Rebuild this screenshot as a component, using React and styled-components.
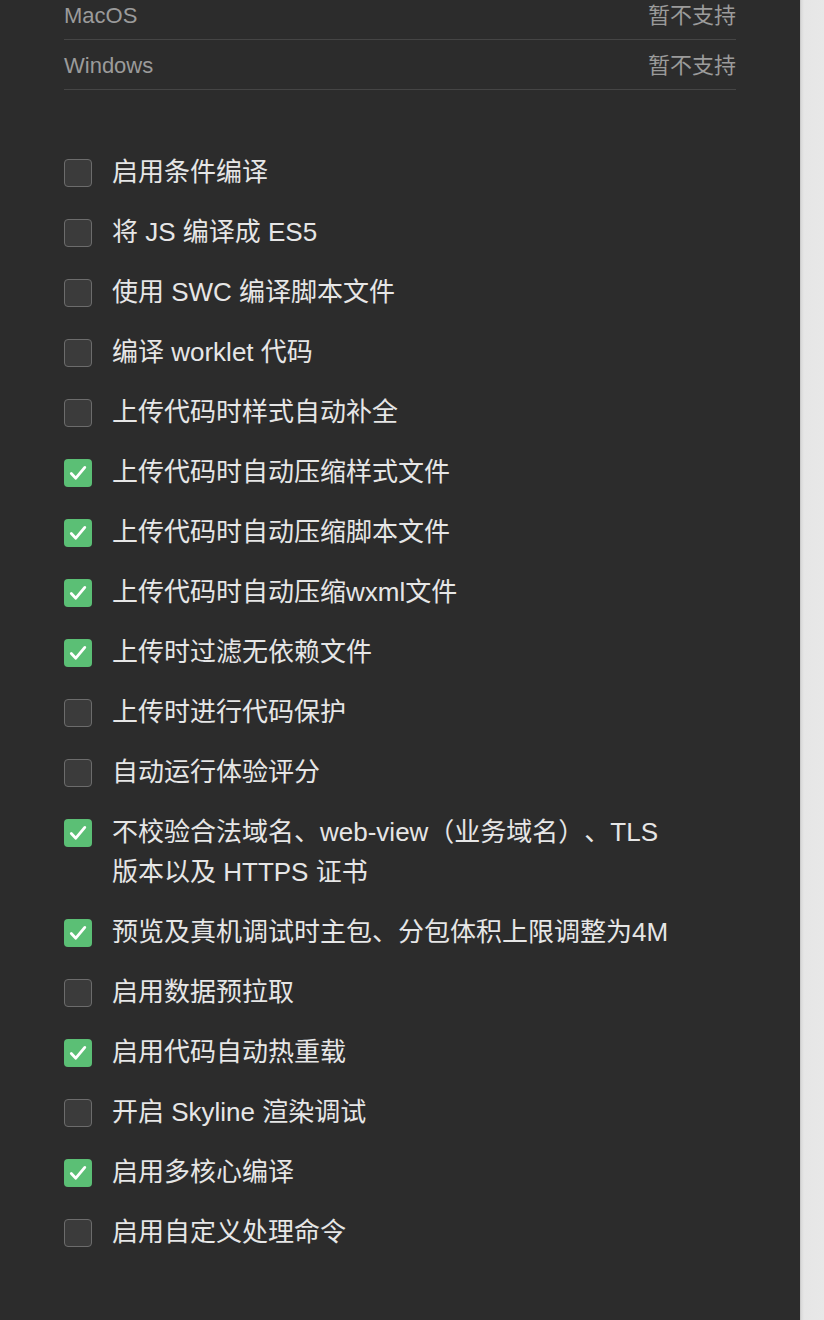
import React from 'react'
import styled, { createGlobalStyle } from 'styled-components'

const GlobalStyle = createGlobalStyle`
  html, body {
    margin: 0;
    padding: 0;
    background: #2c2c2c;
  }
  body {
    font-family: "Liberation Sans", "Noto Sans CJK SC", sans-serif;
    text-spacing-trim: space-all;
  }
`

const platforms = [
  { name: 'MacOS', status: '暂不支持' },
  { name: 'Windows', status: '暂不支持' },
]

const options = [
  { label: '启用条件编译', checked: false },
  { label: '将 JS 编译成 ES5', checked: false },
  { label: '使用 SWC 编译脚本文件', checked: false },
  { label: '编译 worklet 代码', checked: false },
  { label: '上传代码时样式自动补全', checked: false },
  { label: '上传代码时自动压缩样式文件', checked: true },
  { label: '上传代码时自动压缩脚本文件', checked: true },
  { label: '上传代码时自动压缩wxml文件', checked: true },
  { label: '上传时过滤无依赖文件', checked: true },
  { label: '上传时进行代码保护', checked: false },
  { label: '自动运行体验评分', checked: false },
  { label: '不校验合法域名、web-view（业务域名）、TLS 版本以及 HTTPS 证书', checked: true },
  { label: '预览及真机调试时主包、分包体积上限调整为4M', checked: true },
  { label: '启用数据预拉取', checked: false },
  { label: '启用代码自动热重载', checked: true },
  { label: '开启 Skyline 渲染调试', checked: false },
  { label: '启用多核心编译', checked: true },
  { label: '启用自定义处理命令', checked: false },
]

function Checkbox({ checked }) {
  return (
    <Box $checked={checked}>
      {checked && (
        <svg width="28" height="28" viewBox="0 0 28 28">
          <path
            d="M7.3 14.6 L11.8 19.2 L20.8 8.4"
            fill="none"
            stroke="#fff"
            strokeWidth="2.8"
            strokeLinecap="round"
            strokeLinejoin="round"
          />
        </svg>
      )}
    </Box>
  )
}

export default function App() {
  return (
    <Page>
      <GlobalStyle />
      <Panel>
        <PlatformList>
          {platforms.map((p) => (
            <PlatformRow key={p.name}>
              <span>{p.name}</span>
              <span>{p.status}</span>
            </PlatformRow>
          ))}
        </PlatformList>
        <OptionList>
          {options.map((o) => (
            <OptionRow key={o.label}>
              <Checkbox checked={o.checked} />
              <OptionLabel>{o.label}</OptionLabel>
            </OptionRow>
          ))}
        </OptionList>
      </Panel>
      <SideStrip />
    </Page>
  )
}

const Page = styled.div`
  display: flex;
  width: 824px;
  height: 1320px;
  overflow: hidden;
`

const Panel = styled.div`
  width: 800px;
  flex-shrink: 0;
  background: #2c2c2c;
  padding: 0 64px;
  box-sizing: border-box;
`

const SideStrip = styled.div`
  flex: 1;
  background: linear-gradient(to right, #bdbdbd 0, #d9d9d9 1px, #e6e6e6 4px, #e8e8e8 100%);
`

const PlatformList = styled.div`
  margin-top: -10px;
`

const PlatformRow = styled.div`
  display: flex;
  justify-content: space-between;
  align-items: baseline;
  height: 49px;
  line-height: 52px;
  border-bottom: 1px solid #454545;
  font-size: 22px;
  color: #9b9b9b;
`

const OptionList = styled.div`
  display: flex;
  flex-direction: column;
  gap: 20px;
  padding-top: 62px;
`

const OptionRow = styled.div`
  display: flex;
  align-items: flex-start;
  gap: 20px;
`

const Box = styled.div`
  flex-shrink: 0;
  width: 28px;
  height: 28px;
  margin-top: 7px;
  box-sizing: border-box;
  border-radius: 4px;
  background: ${(p) => (p.$checked ? '#5bbf75' : '#3b3b3b')};
  border: ${(p) => (p.$checked ? 'none' : '1.5px solid #6c6c6c')};
  display: flex;
  align-items: center;
  justify-content: center;
`

const OptionLabel = styled.div`
  font-size: 26px;
  line-height: 40px;
  color: #e6e6e6;
  max-width: 560px;
`
